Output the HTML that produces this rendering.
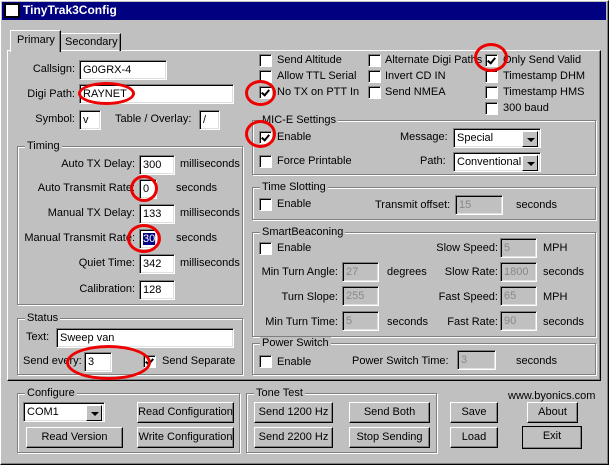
<!DOCTYPE html>
<html><head><style>
*{margin:0;padding:0;box-sizing:border-box}
body{width:609px;height:465px;background:#c0c0c0;font-family:"Liberation Sans",sans-serif;font-size:11px;color:#000;position:relative;overflow:hidden}
div,span{position:absolute}
.t{white-space:nowrap;line-height:13px}
.r{text-align:right}
.in{background:#fff;border-top:1px solid #808080;border-left:1px solid #808080;border-bottom:1px solid #fff;border-right:1px solid #fff;box-shadow:inset 1px 1px 0 #000,inset -1px -1px 0 #dfdfdf;padding:3px 0 0 3px;line-height:12px;white-space:nowrap}
.dis{background:#c0c0c0;color:#888}
.g{border:1px solid #808080;box-shadow:1px 1px 0 #fff,inset 1px 1px 0 #fff}
.gt{background:#c0c0c0;padding:0 2px;top:-7px;left:7px;white-space:nowrap;line-height:13px}
.cb{width:13px;height:13px;background:#fff;border-top:1px solid #808080;border-left:1px solid #808080;border-bottom:1px solid #fff;border-right:1px solid #fff;box-shadow:inset 1px 1px 0 #000}
.cb.k::after{content:"";position:absolute;left:3px;top:1px;width:3px;height:6px;border:solid #000;border-width:0 2px 2px 0;transform:rotate(40deg)}
.b{border-top:1px solid #fff;border-left:1px solid #fff;border-right:1px solid #000;border-bottom:1px solid #000;box-shadow:inset -1px -1px 0 #808080;text-align:center;line-height:18px;white-space:nowrap}
.sel .ar{right:2px;top:2px;width:16px;height:16px;background:#c0c0c0;border-top:1px solid #fff;border-left:1px solid #fff;border-right:1px solid #000;border-bottom:1px solid #000}
.sel .ar::after{content:"";position:absolute;left:4px;top:6px;border:4px solid transparent;border-top:4px solid #000;border-bottom:0}
.el{border:3px solid #e00;border-radius:50%}
</style></head><body>
<div style="left:0;top:0;width:609px;height:465px;border:1px solid #fff;border-right-color:#000;border-bottom-color:#000;box-shadow:inset -1px -1px 0 #808080"></div>
<div style="left:2px;top:2px;width:604px;height:18px;background:#000080"></div>
<div style="left:4px;top:3px;width:16px;height:15px;background:#fff;border:2px solid #000"></div>
<div class="t" style="left:23px;top:4px;color:#fff;font-weight:bold;font-size:12px">TinyTrak3Config</div>

<!-- tabs -->
<div style="left:7px;top:50px;width:594px;height:331px;border-top:1px solid #fff;border-left:1px solid #fff;border-right:1px solid #000;border-bottom:1px solid #000;box-shadow:inset -1px -1px 0 #808080"></div>
<div style="left:60px;top:33px;width:61px;height:18px;border-top:1px solid #fff;border-left:1px solid #fff;border-right:1px solid #000;box-shadow:inset -1px 0 0 #808080"></div>
<div class="t" style="left:65px;top:36px">Secondary</div>
<div style="left:10px;top:30px;width:51px;height:22px;background:#c0c0c0;border-top:1px solid #fff;border-left:1px solid #fff;border-right:1px solid #000;box-shadow:inset -1px 0 0 #808080"></div>
<div class="t" style="left:17px;top:34px">Primary</div>

<div class="t r" style="left:0;width:75px;top:63px">Callsign:</div>
<div class="in" style="left:79px;top:60px;width:88px;height:20px">G0GRX-4</div>
<div class="t r" style="left:0;width:75px;top:88px">Digi Path:</div>
<div class="in" style="left:79px;top:84px;width:155px;height:20px">RAYNET</div>
<div class="t r" style="left:0;width:75px;top:113px">Symbol:</div>
<div class="in" style="left:79px;top:110px;width:22px;height:20px">v</div>
<div class="t" style="left:115px;top:113px">Table / Overlay:</div>
<div class="in" style="left:199px;top:110px;width:21px;height:20px">/</div>

<div class="g" style="left:17px;top:146px;width:226px;height:159px"><span class="gt">Timing</span></div>
<div class="t r" style="left:0;width:135px;top:158px">Auto TX Delay:</div>
<div class="in" style="left:139px;top:155px;width:36px;height:20px">300</div>
<div class="t" style="left:180px;top:158px">milliseconds</div>
<div class="t r" style="left:0;width:135px;top:182px">Auto Transmit Rate:</div>
<div class="in" style="left:139px;top:179px;width:18px;height:20px">0</div>
<div class="t" style="left:176px;top:182px">seconds</div>
<div class="t r" style="left:0;width:135px;top:207px">Manual TX Delay:</div>
<div class="in" style="left:139px;top:204px;width:36px;height:20px">133</div>
<div class="t" style="left:180px;top:207px">milliseconds</div>
<div class="t r" style="left:0;width:135px;top:232px">Manual Transmit Rate:</div>
<div class="in" style="left:139px;top:229px;width:18px;height:20px"><span style="position:static;background:#000080;color:#fff">30</span></div>
<div class="t" style="left:176px;top:232px">seconds</div>
<div class="t r" style="left:0;width:135px;top:257px">Quiet Time:</div>
<div class="in" style="left:139px;top:254px;width:36px;height:20px">342</div>
<div class="t" style="left:180px;top:257px">milliseconds</div>
<div class="t r" style="left:0;width:135px;top:283px">Calibration:</div>
<div class="in" style="left:139px;top:280px;width:36px;height:20px">128</div>

<div class="g" style="left:17px;top:318px;width:226px;height:57px"><span class="gt">Status</span></div>
<div class="t" style="left:26px;top:331px">Text:</div>
<div class="in" style="left:56px;top:328px;width:178px;height:20px">Sweep van</div>
<div class="t" style="left:23px;top:355px">Send every:</div>
<div class="in" style="left:84px;top:352px;width:28px;height:20px">3</div>
<div class="cb k" style="left:143px;top:355px"></div>
<div class="t" style="left:162px;top:355px">Send Separate</div>

<!-- right checkboxes -->
<div class="cb" style="left:259px;top:54px"></div><div class="t" style="left:277px;top:54px">Send Altitude</div>
<div class="cb" style="left:259px;top:70px"></div><div class="t" style="left:277px;top:70px">Allow TTL Serial</div>
<div class="cb k" style="left:259px;top:86px"></div><div class="t" style="left:277px;top:86px">No TX on PTT In</div>
<div class="cb" style="left:368px;top:54px"></div><div class="t" style="left:385px;top:54px">Alternate Digi Paths</div>
<div class="cb" style="left:368px;top:70px"></div><div class="t" style="left:385px;top:70px">Invert CD IN</div>
<div class="cb" style="left:368px;top:86px"></div><div class="t" style="left:385px;top:86px">Send NMEA</div>
<div class="cb k" style="left:485px;top:54px"></div><div class="t" style="left:503px;top:54px">Only Send Valid</div>
<div class="cb" style="left:485px;top:70px"></div><div class="t" style="left:503px;top:70px">Timestamp DHM</div>
<div class="cb" style="left:485px;top:86px"></div><div class="t" style="left:503px;top:86px">Timestamp HMS</div>
<div class="cb" style="left:485px;top:102px"></div><div class="t" style="left:503px;top:102px">300 baud</div>

<div class="g" style="left:252px;top:120px;width:344px;height:55px"><span class="gt">MIC-E Settings</span></div>
<div class="cb k" style="left:259px;top:131px"></div><div class="t" style="left:277px;top:131px">Enable</div>
<div class="t" style="left:400px;top:131px">Message:</div>
<div class="in sel" style="left:453px;top:128px;width:88px;height:20px">Special<span class="ar"></span></div>
<div class="cb" style="left:259px;top:155px"></div><div class="t" style="left:277px;top:155px">Force Printable</div>
<div class="t" style="left:420px;top:155px">Path:</div>
<div class="in sel" style="left:453px;top:152px;width:88px;height:20px">Conventional<span class="ar"></span></div>

<div class="g" style="left:252px;top:187px;width:344px;height:33px"><span class="gt">Time Slotting</span></div>
<div class="cb" style="left:259px;top:198px"></div><div class="t" style="left:277px;top:198px">Enable</div>
<div class="t" style="left:375px;top:199px">Transmit offset:</div>
<div class="in dis" style="left:455px;top:195px;width:48px;height:20px">15</div>
<div class="t" style="left:516px;top:199px">seconds</div>

<div class="g" style="left:252px;top:232px;width:344px;height:105px"><span class="gt">SmartBeaconing</span></div>
<div class="cb" style="left:259px;top:242px"></div><div class="t" style="left:277px;top:242px">Enable</div>
<div class="t r" style="left:380px;width:118px;top:242px">Slow Speed:</div>
<div class="in dis" style="left:500px;top:238px;width:37px;height:20px">5</div><div class="t" style="left:543px;top:242px">MPH</div>
<div class="t r" style="left:240px;width:98px;top:266px">Min Turn Angle:</div>
<div class="in dis" style="left:342px;top:262px;width:37px;height:20px">27</div><div class="t" style="left:387px;top:266px">degrees</div>
<div class="t r" style="left:380px;width:118px;top:266px">Slow Rate:</div>
<div class="in dis" style="left:500px;top:262px;width:37px;height:20px">1800</div><div class="t" style="left:543px;top:266px">seconds</div>
<div class="t r" style="left:240px;width:98px;top:291px">Turn Slope:</div>
<div class="in dis" style="left:342px;top:286px;width:37px;height:20px">255</div>
<div class="t r" style="left:380px;width:118px;top:291px">Fast Speed:</div>
<div class="in dis" style="left:500px;top:286px;width:37px;height:20px">65</div><div class="t" style="left:543px;top:291px">MPH</div>
<div class="t r" style="left:240px;width:98px;top:316px">Min Turn Time:</div>
<div class="in dis" style="left:342px;top:311px;width:37px;height:20px">5</div><div class="t" style="left:387px;top:316px">seconds</div>
<div class="t r" style="left:380px;width:118px;top:316px">Fast Rate:</div>
<div class="in dis" style="left:500px;top:311px;width:37px;height:20px">90</div><div class="t" style="left:543px;top:316px">seconds</div>

<div class="g" style="left:252px;top:343px;width:344px;height:32px"><span class="gt">Power Switch</span></div>
<div class="cb" style="left:259px;top:355px"></div><div class="t" style="left:277px;top:356px">Enable</div>
<div class="t" style="left:352px;top:355px">Power Switch Time:</div>
<div class="in dis" style="left:457px;top:350px;width:39px;height:20px">3</div>
<div class="t" style="left:516px;top:355px">seconds</div>

<!-- bottom -->
<div class="g" style="left:17px;top:393px;width:223px;height:60px"><span class="gt">Configure</span></div>
<div class="in sel" style="left:23px;top:402px;width:82px;height:20px">COM1<span class="ar"></span></div>
<div class="b" style="left:137px;top:402px;width:97px;height:21px">Read Configuration</div>
<div class="b" style="left:26px;top:427px;width:97px;height:21px">Read Version</div>
<div class="b" style="left:137px;top:427px;width:97px;height:21px">Write Configuration</div>
<div class="g" style="left:246px;top:393px;width:191px;height:60px"><span class="gt">Tone Test</span></div>
<div class="b" style="left:254px;top:402px;width:79px;height:21px">Send 1200 Hz</div>
<div class="b" style="left:349px;top:402px;width:81px;height:21px">Send Both</div>
<div class="b" style="left:254px;top:427px;width:79px;height:21px">Send 2200 Hz</div>
<div class="b" style="left:349px;top:427px;width:81px;height:21px">Stop Sending</div>
<div class="t" style="left:508px;top:390px">www.byonics.com</div>
<div class="b" style="left:450px;top:402px;width:48px;height:21px">Save</div>
<div class="b" style="left:527px;top:402px;width:51px;height:21px">About</div>
<div class="b" style="left:450px;top:427px;width:48px;height:21px">Load</div>
<div class="b" style="left:522px;top:426px;width:60px;height:23px;outline:1px solid #000;outline-offset:-1px">Exit</div>

<!-- red circles -->
<div class="el" style="left:78px;top:82px;width:57px;height:23px"></div>
<div class="el" style="left:474px;top:43px;width:34px;height:29px"></div>
<div class="el" style="left:245px;top:80px;width:31px;height:26px"></div>
<div class="el" style="left:245px;top:120px;width:31px;height:28px"></div>
<div class="el" style="left:130px;top:175px;width:28px;height:27px"></div>
<div class="el" style="left:127px;top:224px;width:34px;height:29px"></div>
<div class="el" style="left:66px;top:345px;width:85px;height:35px"></div>
</body></html>
